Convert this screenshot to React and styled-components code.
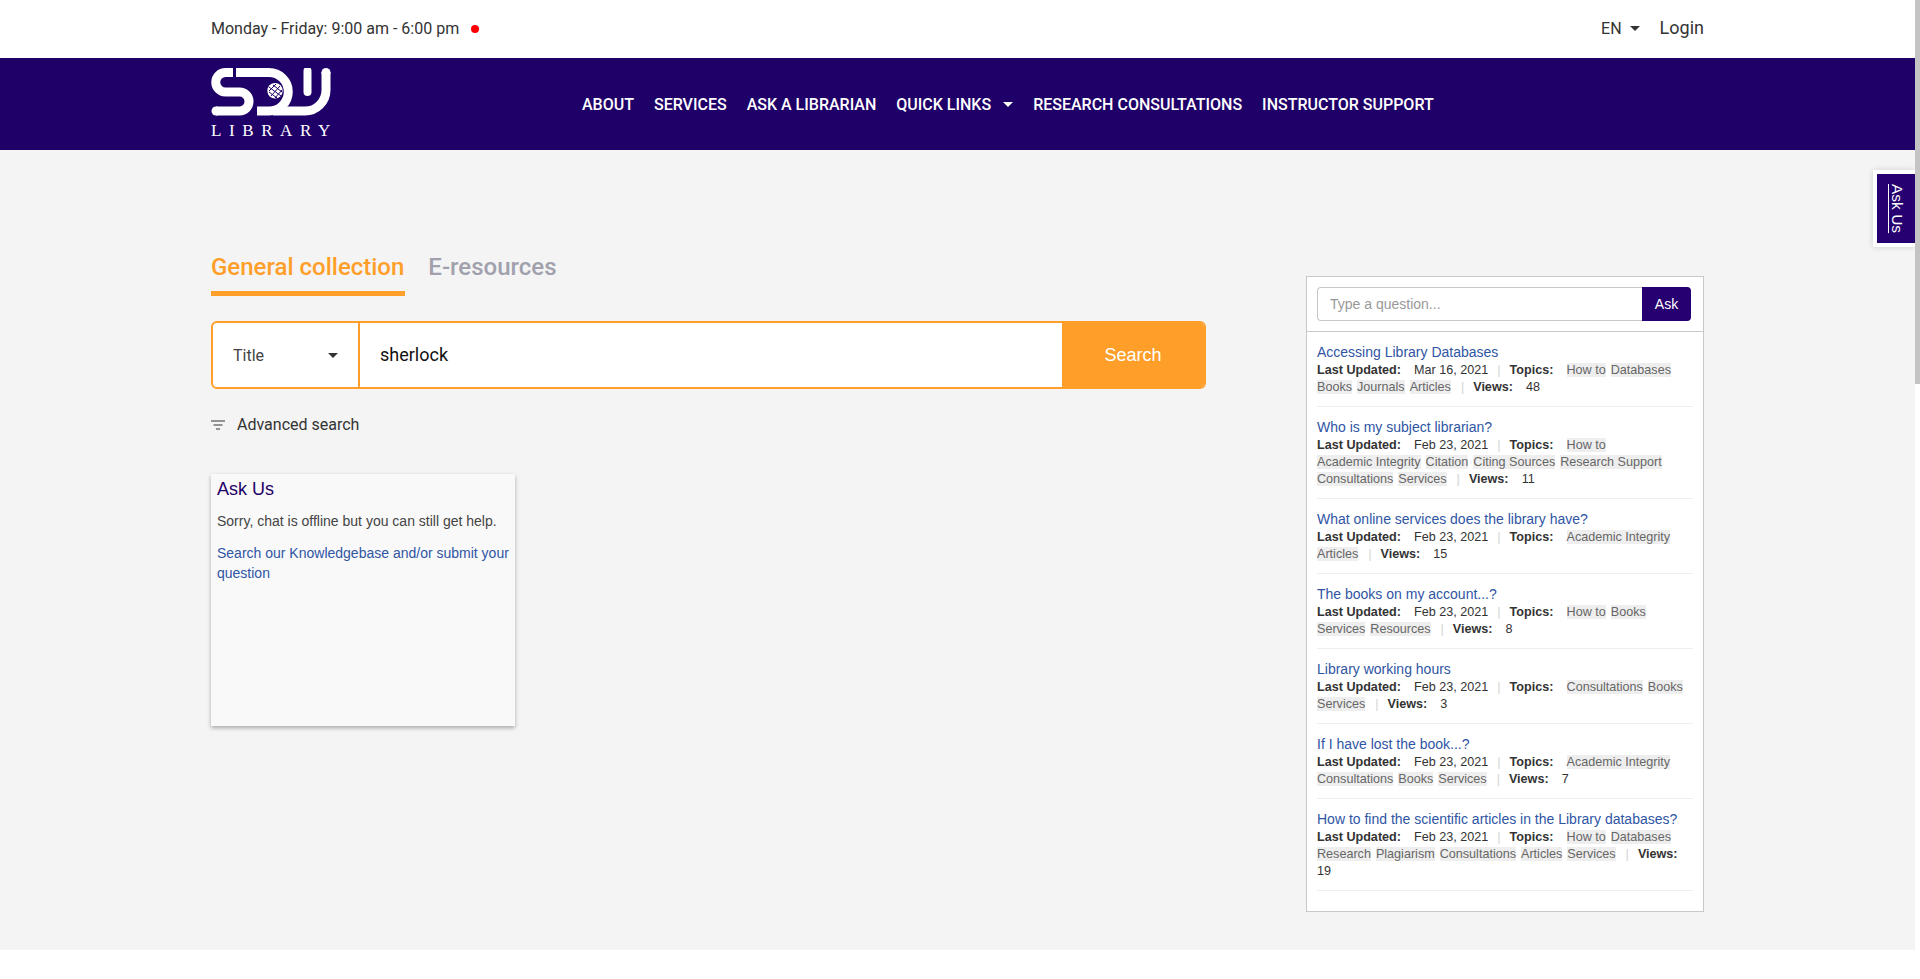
import React from 'react';
import styled, { createGlobalStyle } from 'styled-components';

const GlobalStyle = createGlobalStyle`
  html, body {
    margin: 0;
    background: #fff;
    font-family: Roboto, "Liberation Sans", sans-serif;
    color: #333;
  }
  * { box-sizing: border-box; }
`;

const faqs = [
  { title: 'Accessing Library Databases', date: 'Mar 16, 2021', topics: ['How to', 'Databases', 'Books', 'Journals', 'Articles'], views: 48 },
  { title: 'Who is my subject librarian?', date: 'Feb 23, 2021', topics: ['How to', 'Academic Integrity', 'Citation', 'Citing Sources', 'Research Support', 'Consultations', 'Services'], views: 11 },
  { title: 'What online services does the library have?', date: 'Feb 23, 2021', topics: ['Academic Integrity', 'Articles'], views: 15 },
  { title: 'The books on my account...?', date: 'Feb 23, 2021', topics: ['How to', 'Books', 'Services', 'Resources'], views: 8 },
  { title: 'Library working hours', date: 'Feb 23, 2021', topics: ['Consultations', 'Books', 'Services'], views: 3 },
  { title: 'If I have lost the book...?', date: 'Feb 23, 2021', topics: ['Academic Integrity', 'Consultations', 'Books', 'Services'], views: 7 },
  { title: 'How to find the scientific articles in the Library databases?', date: 'Feb 23, 2021', topics: ['How to', 'Databases', 'Research', 'Plagiarism', 'Consultations', 'Articles', 'Services'], views: 19 },
];

function Logo() {
  return (
    <svg width="122" height="48" viewBox="0 0 122 48" fill="none">
      <g stroke="#fff" strokeWidth="9">
        <path d="M22 4.5H14.5A9.75 9.75 0 0 0 14.5 24H28.5A9.5 9.5 0 0 1 28.5 43H5" strokeLinejoin="round" />
        <path d="M25 4.5H58A19.25 19.25 0 0 1 58 43H46" />
        <path d="M115 4V22A21 21 0 0 1 94 43H62" />
        <path d="M96.5 3V24" strokeLinecap="round" strokeWidth="8" />
      </g>
      <circle cx="5" cy="43" r="4.5" fill="#fff" />
      <circle cx="115" cy="4.5" r="4.5" fill="#fff" />
      <circle cx="64" cy="22.7" r="7.7" fill="#fff" />
      <path d="M58 19L70 28M58 24L66 30M62 17L71 24M60 28L69 18M64 30L71 22M58 23L65 16" stroke="#1f0068" strokeWidth="1" />
    </svg>
  );
}

export default function App() {
  return (
    <Page>
      <GlobalStyle />
      <TopBar>
        <Hours>
          Monday - Friday: 9:00 am - 6:00 pm
          <Dot />
        </Hours>
        <TopRight>
          <Lang>EN <Caret /></Lang>
          <Login>Login</Login>
        </TopRight>
      </TopBar>
      <NavBar>
        <LogoBox>
          <Logo />
          <LogoText>LIBRARY</LogoText>
        </LogoBox>
        <NavLinks>
          <NavLink>ABOUT</NavLink>
          <NavLink>SERVICES</NavLink>
          <NavLink>ASK A LIBRARIAN</NavLink>
          <NavLink>QUICK LINKS <NavCaret /></NavLink>
          <NavLink>RESEARCH CONSULTATIONS</NavLink>
          <NavLink>INSTRUCTOR SUPPORT</NavLink>
        </NavLinks>
      </NavBar>
      <Main>
        <LeftCol>
          <Tabs>
            <Tab $active>General collection</Tab>
            <Tab>E-resources</Tab>
          </Tabs>
          <SearchBox>
            <SelectBox>
              Title
              <Caret />
            </SelectBox>
            <QueryInput defaultValue="sherlock" />
            <SearchButton>Search</SearchButton>
          </SearchBox>
          <Advanced>
            <svg width="14" height="10" viewBox="0 0 14 10" fill="none" stroke="#333" strokeWidth="1">
              <path d="M0 1H14M2.5 5H11.5M5 9H9" />
            </svg>
            Advanced search
          </Advanced>
          <ChatCard>
            <ChatTitle>Ask Us</ChatTitle>
            <ChatText>Sorry, chat is offline but you can still get help.</ChatText>
            <ChatLink>Search our Knowledgebase and/or submit your question</ChatLink>
          </ChatCard>
        </LeftCol>
        <FaqPanel>
          <AskRow>
            <AskInput placeholder="Type a question..." />
            <AskButton>Ask</AskButton>
          </AskRow>
          <FaqList>
            {faqs.map((f) => (
              <FaqItem key={f.title}>
                <FaqTitle>{f.title}</FaqTitle>
                <FaqMeta>
                  <MetaLabel>Last Updated:</MetaLabel>
                  {' \u00a0 '}
                  {f.date}
                  <Sep>|</Sep>
                  <MetaLabel>Topics:</MetaLabel>
                  {' \u00a0 '}
                  {f.topics.map((t) => (
                    <Topic key={t}>{t}</Topic>
                  ))}
                  <ViewsSep>|</ViewsSep>
                  <MetaLabel>Views:</MetaLabel>
                  {' \u00a0 '}
                  {f.views}
                </FaqMeta>
              </FaqItem>
            ))}
          </FaqList>
        </FaqPanel>
      </Main>
      <AskTab>
        <AskTabInner>Ask Us</AskTabInner>
      </AskTab>
      <ScrollThumb />
      <Footer />
    </Page>
  );
}

const Page = styled.div`
  width: calc(100% - 5px);
`;
const TopBar = styled.div`
  height: 58px;
  padding: 0 211px 2px;
  display: flex;
  justify-content: space-between;
  align-items: center;
`;
const Hours = styled.div`
  font-size: 16px;
  display: flex;
  align-items: center;
`;
const Dot = styled.span`
  width: 8px;
  height: 8px;
  border-radius: 50%;
  background: #ff0000;
  margin-left: 12px;
  margin-top: 2px;
`;
const TopRight = styled.div`
  display: flex;
  align-items: center;
  gap: 20px;
`;
const Lang = styled.div`
  font-size: 16px;
  display: flex;
  align-items: center;
  gap: 8px;
`;
const Login = styled.div`
  font-size: 18px;
  margin-bottom: 1px;
`;
const Caret = styled.span`
  width: 0;
  height: 0;
  border-left: 5.5px solid transparent;
  border-right: 5.5px solid transparent;
  border-top: 5.5px solid #333;
`;
const NavBar = styled.div`
  height: 92px;
  background: #1f0068;
  padding: 10px 211px 0;
  display: flex;
`;
const LogoBox = styled.div`
  width: 122px;
  display: flex;
  flex-direction: column;
`;
const LogoText = styled.div`
  font-family: "Liberation Serif", serif;
  font-size: 17px;
  line-height: 17px;
  color: #fff;
  letter-spacing: 7.6px;
  margin-top: 6px;
  white-space: nowrap;
`;
const NavLinks = styled.div`
  margin-left: 249px;
  height: 72px;
  display: flex;
  align-items: center;
  gap: 20px;
`;
const NavLink = styled.a`
  font-size: 16px;
  font-weight: 500;
  color: #fff;
  display: flex;
  align-items: center;
  gap: 8px;
`;
const NavCaret = styled(Caret)`
  margin-left: 4px;
  border-top-color: #fff;
`;
const Main = styled.div`
  height: 800px;
  background: #f4f4f4;
  padding: 0 211px;
  display: flex;
  justify-content: space-between;
  align-items: flex-start;
`;
const LeftCol = styled.div`
  width: 995px;
  padding-top: 99px;
`;
const Tabs = styled.div`
  display: flex;
  gap: 23px;
`;
const Tab = styled.div`
  font-size: 24px;
  font-weight: 500;
  line-height: 36px;
  padding: 0 1px 6px 0;
  color: ${(p) => (p.$active ? '#ff9f2a' : '#a1a1ad')};
  border-bottom: 5px solid ${(p) => (p.$active ? '#ff9f2a' : 'transparent')};
`;
const SearchBox = styled.div`
  margin-top: 25px;
  height: 68px;
  display: flex;
  background: #fff;
  border: 2px solid #ff9f2a;
  border-radius: 6px;
  overflow: hidden;
`;
const SelectBox = styled.div`
  width: 147px;
  border-right: 2px solid #ff9f2a;
  padding: 0 20px;
  display: flex;
  align-items: center;
  justify-content: space-between;
  font-size: 16px;
  color: #444;
`;
const QueryInput = styled.input`
  flex: 1;
  min-width: 0;
  border: 0;
  outline: 0;
  padding: 0 20px 2px;
  font-family: Roboto, sans-serif;
  font-size: 18px;
  color: #111;
`;
const SearchButton = styled.button`
  width: 142px;
  border: 0;
  background: #ff9f2a;
  color: #fff;
  font-family: "Liberation Sans", sans-serif;
  font-size: 18px;
`;
const Advanced = styled.div`
  margin-top: 26px;
  display: flex;
  align-items: center;
  gap: 12px;
  font-size: 16px;
  line-height: 20px;
`;
const ChatCard = styled.div`
  margin-top: 39px;
  width: 304px;
  height: 252px;
  background: #f9f9f9;
  padding: 4px 6px;
  box-shadow: 0 2px 4px rgba(0, 0, 0, 0.3);
  font-family: "Liberation Sans", sans-serif;
`;
const ChatTitle = styled.div`
  font-size: 18px;
  line-height: 22px;
  color: #1f0068;
`;
const ChatText = styled.div`
  margin-top: 11px;
  font-size: 14px;
  line-height: 20px;
  color: #444;
`;
const ChatLink = styled.a`
  display: block;
  margin-top: 12px;
  font-size: 14px;
  line-height: 20px;
  color: #2f55a4;
`;
const FaqPanel = styled.div`
  width: 398px;
  height: 636px;
  margin-top: 126px;
  background: #fff;
  border: 1px solid #c8c8c8;
  font-family: "Liberation Sans", sans-serif;
`;
const AskRow = styled.div`
  height: 55px;
  padding: 10px 12px 10px 10px;
  display: flex;
  border-bottom: 1px solid #c8c8c8;
`;
const AskInput = styled.input`
  flex: 1;
  min-width: 0;
  height: 34px;
  border: 1px solid #c8c8c8;
  border-right: 0;
  border-radius: 4px 0 0 4px;
  padding: 0 12px;
  font-family: "Liberation Sans", sans-serif;
  font-size: 14px;
  outline: 0;
  &::placeholder { color: #999; }
`;
const AskButton = styled.button`
  width: 49px;
  height: 34px;
  border: 0;
  border-radius: 0 4px 4px 0;
  background: #260070;
  color: #fff;
  font-family: "Liberation Sans", sans-serif;
  font-size: 14px;
`;
const FaqList = styled.div`
  padding: 10px 10px 0;
`;
const FaqItem = styled.div`
  width: 376px;
  padding-bottom: 10px;
  margin-bottom: 10px;
  border-bottom: 1px solid #eee;
`;
const FaqTitle = styled.a`
  display: block;
  font-size: 14px;
  line-height: 20px;
  color: #2f55a4;
`;
const FaqMeta = styled.div`
  font-size: 12.6px;
  line-height: 17px;
  color: #333;
`;
const MetaLabel = styled.b`
  margin-right: 2.6px;
`;
const Sep = styled.span`
  color: #d4d4d4;
  margin: 0 9px;
`;
const ViewsSep = styled(Sep)`
  margin-left: 5px;
`;
const Topic = styled.span`
  display: inline-block;
  height: 14px;
  line-height: 14px;
  margin-right: 5px;
  background: #eee;
  color: #666;
  white-space: nowrap;
`;
const AskTab = styled.div`
  position: fixed;
  right: 5px;
  top: 170px;
  padding: 4px 0 4px 4px;
  background: #fff;
  box-shadow: 0 0 6px rgba(0, 0, 0, 0.15);
`;
const AskTabInner = styled.div`
  width: 38px;
  height: 69px;
  padding-left: 2px;
  background: #260070;
  color: #fff;
  writing-mode: vertical-rl;
  font-family: "Liberation Sans", sans-serif;
  font-size: 15.5px;
  text-decoration: underline;
  display: flex;
  align-items: center;
  justify-content: center;
`;
const ScrollThumb = styled.div`
  position: fixed;
  top: 0;
  right: 0;
  width: 5px;
  height: 384px;
  background: #c4c4c4;
`;
const Footer = styled.div`
  height: 29px;
  background: #fff;
`;
